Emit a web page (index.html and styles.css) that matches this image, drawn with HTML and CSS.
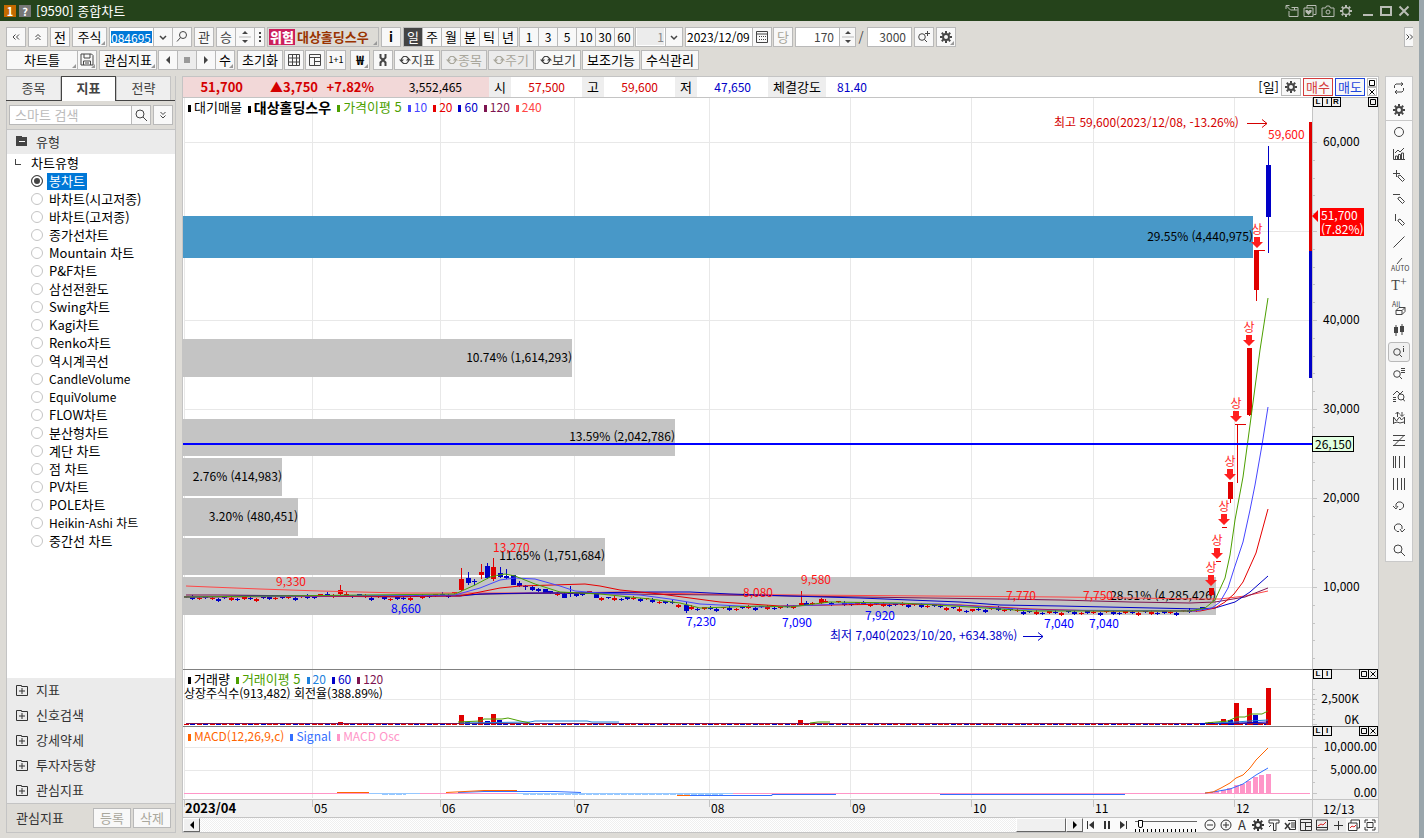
FILE: index.html
```html
<!DOCTYPE html>
<html lang="ko">
<head>
    <meta charset="UTF-8">
    <meta name="viewport" content="width=device-width, initial-scale=1.0">
    <title>[9590] 종합차트</title>
    <link rel="stylesheet" href="styles.css">
</head>
<body>
    <!-- icons -->
    <svg class="defs" aria-hidden="true">
        <symbol id="gear" viewBox="0 0 12 12"><circle cx="6" cy="6" r="3" fill="none" stroke="currentColor" stroke-width="2"/><path d="M6 0v2M6 10v2M0 6h2M10 6h2M1.8 1.8l1.4 1.4M8.8 8.8l1.4 1.4M10.2 1.8L8.8 3.2M3.2 8.8L1.8 10.2" stroke="currentColor" stroke-width="2"/></symbol>
        <symbol id="gear-thin" viewBox="0 0 12 12"><circle cx="6" cy="6" r="3.5" fill="none" stroke="currentColor" stroke-width="1.3"/><path d="M6 0v2M6 10v2M0 6h2M10 6h2M1.8 1.8l1.4 1.4M8.8 8.8l1.4 1.4M10.2 1.8L8.8 3.2M3.2 8.8L1.8 10.2" stroke="currentColor" stroke-width="2"/></symbol>
        <symbol id="find" viewBox="0 0 12 12"><circle cx="5" cy="5" r="4" fill="none" stroke="currentColor"/><path d="M8 8l4 4" stroke="currentColor" fill="none"/></symbol>
        <symbol id="find-left" viewBox="0 0 12 12"><circle cx="7" cy="4" r="3.5" fill="none" stroke="currentColor"/><path d="M4.5 6.500L1 10.5" stroke="currentColor"/></symbol>
        <symbol id="find-plus" viewBox="0 0 12 12"><circle cx="4" cy="6" r="3.3" fill="none" stroke="currentColor"/><path d="M6.500 8.500L9 11M7 2.500h5M9.500 0v5" stroke="currentColor"/></symbol>
        <symbol id="find-info" viewBox="0 0 12 12"><circle cx="4" cy="6" r="3.3" fill="none" stroke="currentColor"/><path d="M6.500 8.500L9 11M10.500 0v1M10.500 2v4" stroke="currentColor"/></symbol>
        <symbol id="find-list" viewBox="0 0 12 12"><circle cx="4" cy="6" r="3.3" fill="none" stroke="currentColor"/><path d="M6.500 8.500L9 11M8 .5h4M8 2.500h4M8 4.500h4" stroke="currentColor"/></symbol>
        <symbol id="down" viewBox="0 0 12 12"><path d="M3 5l3 3 3-3" fill="none" stroke="currentColor" stroke-width="1.5"/></symbol>
        <symbol id="dbl-left" viewBox="0 0 12 12"><path d="M5.500 3.500L3 6l2.500 2.500M9 3.500L6.500 6 9 8.500" fill="none" stroke="currentColor"/></symbol>
        <symbol id="dbl-right" viewBox="0 0 12 12"><path d="M3.500 3.500L6 6 3.500 8.500M7 3.500L9.500 6 7 8.500" fill="none" stroke="currentColor"/></symbol>
        <symbol id="dbl-up" viewBox="0 0 12 12"><path d="M3.500 6L6 3.500 8.500 6M3.500 9L6 6.500 8.500 9" fill="none" stroke="currentColor"/></symbol>
        <symbol id="dbl-down" viewBox="0 0 12 12"><path d="M3.500 3L6 5.500 8.500 3M3.500 6.500L6 9l2.500-2.500" fill="none" stroke="currentColor"/></symbol>
        <symbol id="updown" viewBox="0 0 12 16"><path d="M3 5h6L6 2zM3 11h6l-3 3z" fill="currentColor"/><path d="M0 8h12" stroke="#b9b9b9"/></symbol>
        <symbol id="dots" viewBox="0 0 4 12"><path d="M1 1h2v2H1zM1 5h2v2H1zM1 9h2v2H1z" fill="currentColor"/></symbol>
        <symbol id="cal" viewBox="0 0 12 12"><path d="M.5 .5h11v11H.5zM.5 3h11" fill="none" stroke="currentColor"/><path d="M3 5.500h7M3 8.500h7" stroke="currentColor" stroke-dasharray="1 1"/></symbol>
        <symbol id="save" viewBox="0 0 14 14"><path d="M1 1h10.500l1.500 1.500V12H1zM4 1v4h6V1M3.500 12V8h7v4M5 10h4" fill="none" stroke="currentColor"/></symbol>
        <symbol id="left" viewBox="0 0 12 12"><path d="M8 2v8L4 6z" fill="currentColor"/></symbol>
        <symbol id="right" viewBox="0 0 12 12"><path d="M4 2v8l4-4z" fill="currentColor"/></symbol>
        <symbol id="stop" viewBox="0 0 12 12"><path d="M3 3h6v6H3z" fill="#999"/></symbol>
        <symbol id="grid" viewBox="0 0 12 12"><path d="M.5 .5h11v11H.5zM.5 4h11M.5 8h11M4.500 .5v11M8.500 .5v11" fill="none" stroke="currentColor"/></symbol>
        <symbol id="layout" viewBox="0 0 12 12"><path d="M.5 .5h11v11H.5zM.5 3.500h11M5.500 3.500v8M5.500 7.500h6" fill="none" stroke="currentColor"/></symbol>
        <symbol id="tools" viewBox="0 0 12 12"><path d="M3.500 0v3.500L6 6l2.500-2.500V0M3.500 12V8.500L6 6l2.500 2.500V12" fill="none" stroke="currentColor" stroke-width="2"/></symbol>
        <symbol id="sync" viewBox="0 0 12 12"><path d="M2.500 6.500V5l2-2.500h3L9 4M9.500 5.500V7l-2 2.500h-3L3 8" fill="none" stroke="currentColor" stroke-width="1.2"/><path d="M0 5.500h5L2.500 8.500zM7 6.500h5L9.500 3.500z" fill="currentColor"/></symbol>
        <symbol id="cycle" viewBox="0 0 12 12"><path d="M1.500 6V3.500L3 2h7M8 .5L10 2 8 4M10.500 6v2.500L9 10H2M4 8l-2 2 2 2" fill="none" stroke="currentColor"/></symbol>
        <symbol id="folder-plus" viewBox="0 0 12 11"><path d="M.5 .5h5V1.500h6v9H.5zM3 6h6M6 3v6" fill="none" stroke="currentColor"/></symbol>
        <symbol id="folder" viewBox="0 0 12 11"><path d="M0 0h6v1h5v9H0z" fill="#444"/><path d="M3 5.500h6" stroke="#fff"/></symbol>
        <symbol id="circle" viewBox="0 0 12 12"><circle cx="6" cy="6" r="4.5" fill="none" stroke="currentColor"/></symbol>
        <symbol id="chart" viewBox="0 0 12 12"><path d="M.5 1v10.500H12M2.500 11V8h2v3M5.500 11V6.500h2V11M8.500 11V5h2v6M2 5l3-3 2 2 4-4" fill="none" stroke="currentColor"/></symbol>
        <symbol id="pen-plus" viewBox="0 0 12 12"><path d="M0 3.500h7M3.500 0v7M5 6l2-1 4.500 4.500-2 2L5 7z" fill="none" stroke="currentColor"/></symbol>
        <symbol id="pen-h" viewBox="0 0 12 12"><path d="M0 2.500h7M5 6l2-1 4.500 4.500-2 2L5 7z" fill="none" stroke="currentColor"/></symbol>
        <symbol id="pen-v" viewBox="0 0 12 12"><path d="M2.500 0v7M5 6l2-1 4.500 4.500-2 2L5 7z" fill="none" stroke="currentColor"/></symbol>
        <symbol id="line" viewBox="0 0 12 12"><path d="M.5 11.500l11-11" stroke="currentColor"/></symbol>
        <symbol id="candles" viewBox="0 0 12 12"><path d="M3 1v11M9 0v11" stroke="currentColor"/><path d="M1 3h4v6H1zM7 2h4v6H7z" fill="currentColor"/></symbol>
        <symbol id="find-wave" viewBox="0 0 12 12"><path d="M0 5l4-4 3 3 3-3M0 7.500h3M0 9.500h3M0 11.500h3M10 9l2 2.500" fill="none" stroke="currentColor"/><circle cx="8" cy="7" r="3" fill="none" stroke="currentColor"/></symbol>
        <symbol id="wave" viewBox="0 0 12 12"><path d="M.5 12V5l3 4 3-4 2 3 3-3v7M1 11l3-1 3 1 4-1M4.500 0v5M2.500 2l2-2 2 2M9 0v4M7 2.500l2 2 2-2" fill="none" stroke="currentColor"/></symbol>
        <symbol id="zed" viewBox="0 0 12 12"><path d="M0 1.500h12M0 6.500h12M0 11.500h12M11 1.500l-10 10" stroke="currentColor"/></symbol>
        <symbol id="bars-a" viewBox="0 0 12 12"><path d="M.5 0v12M2.500 0v12M6.500 0v12M11.500 0v12" stroke="currentColor"/></symbol>
        <symbol id="bars-b" viewBox="0 0 12 12"><path d="M.5 0v12M4.500 0v12M8.500 0v12M11.500 0v12" stroke="currentColor"/></symbol>
        <symbol id="undo" viewBox="0 0 12 12"><path d="M3 7V4L5 2h3l2.500 2v3L8 9.500H6M0 6l3 3 2-3" fill="none" stroke="currentColor"/></symbol>
        <symbol id="redo" viewBox="0 0 12 12"><path d="M9 7V4L7 2H4L1.500 4v3L4 9.500h2M12 7l-3 3-2-3" fill="none" stroke="currentColor"/></symbol>
        <symbol id="minus-c" viewBox="0 0 12 12"><circle cx="6" cy="6" r="5" fill="none" stroke="currentColor"/><path d="M3 6h6" stroke="currentColor"/></symbol>
        <symbol id="plus-c" viewBox="0 0 12 12"><circle cx="6" cy="6" r="5" fill="none" stroke="currentColor"/><path d="M3 6h6M6 3v6" stroke="currentColor"/></symbol>
        <symbol id="first" viewBox="0 0 12 12"><path d="M2.500 2v8" stroke="currentColor"/><path d="M9 2v8L4 6z" fill="currentColor"/></symbol>
        <symbol id="last" viewBox="0 0 12 12"><path d="M9.500 2v8" stroke="currentColor"/><path d="M3 2v8l5-4z" fill="currentColor"/></symbol>
        <symbol id="pause" viewBox="0 0 12 12"><path d="M4 2v8M8 2v8" stroke="currentColor" stroke-width="2"/></symbol>
        <symbol id="cross" viewBox="0 0 12 12"><path d="M2 6.500h9M6.500 2v9" stroke="currentColor"/></symbol>
        <symbol id="tee" viewBox="0 0 12 12"><path d="M1 1h10v3H8v7.500H5.500V4H1zM3 6L1 8" fill="none" stroke="currentColor"/></symbol>
        <symbol id="xls" viewBox="0 0 12 12"><path d="M4 1.500h7.500v9H5M7 4h4M7 6h4M7 8h4" fill="none" stroke="currentColor"/><path d="M1 4l5 6M6 4l-5 6" stroke="currentColor" stroke-width="1.5"/></symbol>
        <symbol id="spark" viewBox="0 0 12 12"><path d="M.5 1h11v10H.5zM.5 8.500h11" fill="none" stroke="currentColor"/><path d="M2 7l3-2 2 1 3-3" fill="none" stroke="#d22"/></symbol>
        <symbol id="stack" viewBox="0 0 12 12"><path d="M3 4V1h8.500v8H9M.5 4H9v7.500H.5z" fill="none" stroke="currentColor"/><path d="M2 9l2-2 2 1 2-2" fill="none" stroke="#d22"/></symbol>
        <symbol id="full" viewBox="0 0 12 12"><path d="M3 3.500h6v5H3zM1 4V1h3M8 1h3v3M11 8v3H8M4 11H1V8" fill="none" stroke="currentColor"/></symbol>
        <symbol id="popout" viewBox="0 0 13 12"><path d="M6 2.500h6.500v9H3.500V6M5 5h7M9 2.500V5M1 1l4 4M.5 4V.5H4" fill="none" stroke="currentColor"/></symbol>
        <symbol id="copy" viewBox="0 0 13 12"><path d="M3.500 3V.5h9v9H10M.5 3h9v8.500h-9z" fill="none" stroke="currentColor"/><path d="M2 5h2l1 1 1-1h2v2L5 10 2 7z" fill="currentColor"/></symbol>
        <symbol id="camera" viewBox="0 0 13 12"><path d="M.5 3H4l1-2h3l1 2h3.500v8.500H.5z" fill="none" stroke="currentColor"/><circle cx="6.5" cy="7" r="2" fill="none" stroke="currentColor"/></symbol>
        <symbol id="min" viewBox="0 0 12 12"><path d="M1 10h10" stroke="currentColor" stroke-width="2"/></symbol>
        <symbol id="max" viewBox="0 0 12 12"><path d="M1 2h10v8H1z" fill="none" stroke="currentColor" stroke-width="2"/></symbol>
        <symbol id="close" viewBox="0 0 12 12"><path d="M1.500 1.500l9 9M10.500 1.500l-9 9" stroke="currentColor" stroke-width="2"/></symbol>
        <symbol id="box" viewBox="0 0 8 8"><path d="M1.500 1.500h5v5h-5z" fill="none" stroke="currentColor"/></symbol>
        <symbol id="x" viewBox="0 0 8 8"><path d="M1.500 1.500l5 5M6.500 1.500l-5 5" stroke="currentColor"/></symbol>
    </svg>

    <header class="titlebar">
        <span class="num">1</span><span class="num help">?</span>
        <h1>[9590] 종합차트</h1>
        <div class="window-btns">
            <button aria-label="분리"><svg><use href="#popout"/></svg></button>
            <button aria-label="복사"><svg><use href="#copy"/></svg></button>
            <button aria-label="캡처"><svg><use href="#camera"/></svg></button>
            <button aria-label="설정"><svg><use href="#gear-thin"/></svg></button>
            <button class="first-win" aria-label="최소화"><svg><use href="#min"/></svg></button>
            <button aria-label="최대화"><svg><use href="#max"/></svg></button>
            <button aria-label="닫기"><svg><use href="#close"/></svg></button>
        </div>
    </header>

    <div class="toolbar">
        <button class="btn" aria-label="이전"><svg><use href="#dbl-left"/></svg></button>
        <button class="btn" aria-label="위로"><svg><use href="#dbl-up"/></svg></button>
        <button class="btn">전</button>
        <button class="btn w34 more">주식</button>
        <div class="group">
            <label class="field w45"><input class="code" type="text" value="084695" aria-label="종목코드"></label>
            <button class="btn" aria-label="목록"><svg><use href="#down"/></svg></button>
            <button class="btn" aria-label="찾기"><svg><use href="#find-left"/></svg></button>
        </div>
        <button class="btn soft">관</button>
        <div class="group">
            <button class="btn soft">승</button>
            <button class="btn spin" aria-label="순서"><svg><use href="#updown"/></svg></button>
            <button class="btn w11" aria-label="더보기"><svg class="dots"><use href="#dots"/></svg></button>
        </div>
        <button class="btn stock more"><b>위험</b>대상홀딩스우</button>
        <button class="btn bold">i</button>
        <div class="group tight">
            <button class="btn on">일</button><button class="btn">주</button><button class="btn">월</button><button class="btn">분</button><button class="btn">틱</button><button class="btn">년</button>
        </div>
        <div class="group tight">
            <button class="btn num12">1</button><button class="btn num12">3</button><button class="btn num12">5</button><button class="btn num12">10</button><button class="btn num12">30</button><button class="btn num12">60</button>
        </div>
        <div class="group">
            <label class="field w30 off"><input type="text" value="1" aria-label="단위" disabled></label>
            <button class="btn w18" aria-label="단위 선택"><svg><use href="#down"/></svg></button>
        </div>
        <div class="group tight">
            <label class="field w68"><input type="text" value="2023/12/09" aria-label="날짜"></label>
            <button class="btn" aria-label="달력"><svg><use href="#cal"/></svg></button>
        </div>
        <button class="btn disabled" disabled>당</button>
        <div class="group tight">
            <label class="field w45 end"><input type="text" value="170" aria-label="표시 개수"></label>
            <button class="btn w16" aria-label="개수 조절"><svg><use href="#updown"/></svg></button>
        </div>
        <span class="slash">/</span>
        <label class="field w45 end"><input type="text" value="3000" aria-label="전체 개수"></label>
        <button class="btn" aria-label="확대"><svg><use href="#find-plus"/></svg></button>
        <button class="btn more" aria-label="설정"><svg><use href="#gear"/></svg></button>
        <button class="btn expand" aria-label="펼치기"><svg><use href="#dbl-right"/></svg></button>
    </div>

    <div class="toolbar second">
        <div class="group">
            <button class="btn w72 more">차트틀</button>
            <button class="btn more" aria-label="저장"><svg class="i14"><use href="#save"/></svg></button>
        </div>
        <button class="btn w58 more">관심지표</button>
        <div class="group">
            <button class="btn" aria-label="뒤로"><svg><use href="#left"/></svg></button>
            <button class="btn dim" aria-label="정지"><svg><use href="#stop"/></svg></button>
            <button class="btn" aria-label="앞으로"><svg><use href="#right"/></svg></button>
            <button class="btn more">수</button>
        </div>
        <button class="btn w46">초기화</button>
        <button class="btn" aria-label="표"><svg><use href="#grid"/></svg></button>
        <button class="btn" aria-label="배치"><svg><use href="#layout"/></svg></button>
        <button class="btn tiny">1+1</button>
        <button class="btn more bold small-gap">₩</button>
        <button class="btn small-gap" aria-label="도구"><svg><use href="#tools"/></svg></button>
        <button class="btn w46 soft"><svg><use href="#sync"/></svg>지표</button>
        <button class="btn w46 disabled dim" disabled><svg><use href="#sync"/></svg>종목</button>
        <button class="btn w46 disabled dim" disabled><svg><use href="#sync"/></svg>주기</button>
        <button class="btn w46 soft"><svg><use href="#sync"/></svg>보기</button>
        <button class="btn w58">보조기능</button>
        <button class="btn w58">수식관리</button>
    </div>

    <main>
        <aside class="sidebar">
            <nav class="tabs">
                <button>종목</button><button class="active">지표</button><button>전략</button>
            </nav>
            <div class="search">
                <input type="text" placeholder="스마트 검색" aria-label="스마트 검색">
                <button class="btn" aria-label="검색"><svg><use href="#find"/></svg></button>
                <button class="btn last" aria-label="펼치기"><svg><use href="#dbl-down"/></svg></button>
            </div>
            <button class="fold open"><svg><use href="#folder"/></svg>유형</button>
            <fieldset class="types">
                <legend>차트유형</legend>
                <label><input type="radio" name="type" checked><span>봉차트</span></label>
                <label><input type="radio" name="type"><span>바차트(시고저종)</span></label>
                <label><input type="radio" name="type"><span>바차트(고저종)</span></label>
                <label><input type="radio" name="type"><span>종가선차트</span></label>
                <label><input type="radio" name="type"><span>Mountain 차트</span></label>
                <label><input type="radio" name="type"><span>P&amp;F차트</span></label>
                <label><input type="radio" name="type"><span>삼선전환도</span></label>
                <label><input type="radio" name="type"><span>Swing차트</span></label>
                <label><input type="radio" name="type"><span>Kagi차트</span></label>
                <label><input type="radio" name="type"><span>Renko차트</span></label>
                <label><input type="radio" name="type"><span>역시계곡선</span></label>
                <label><input type="radio" name="type"><span class="latin">CandleVolume</span></label>
                <label><input type="radio" name="type"><span class="latin">EquiVolume</span></label>
                <label><input type="radio" name="type"><span>FLOW차트</span></label>
                <label><input type="radio" name="type"><span>분산형차트</span></label>
                <label><input type="radio" name="type"><span>계단 차트</span></label>
                <label><input type="radio" name="type"><span>점 차트</span></label>
                <label><input type="radio" name="type"><span>PV차트</span></label>
                <label><input type="radio" name="type"><span>POLE차트</span></label>
                <label><input type="radio" name="type"><span class="latin">Heikin-Ashi 차트</span></label>
                <label><input type="radio" name="type"><span>중간선 차트</span></label>
            </fieldset>
            <button class="fold"><svg><use href="#folder-plus"/></svg>지표</button>
            <button class="fold"><svg><use href="#folder-plus"/></svg>신호검색</button>
            <button class="fold"><svg><use href="#folder-plus"/></svg>강세약세</button>
            <button class="fold"><svg><use href="#folder-plus"/></svg>투자자동향</button>
            <button class="fold"><svg><use href="#folder-plus"/></svg>관심지표</button>
            <div class="side-foot">
                <span>관심지표</span>
                <button class="btn disabled" disabled>등록</button>
                <button class="btn disabled" disabled>삭제</button>
            </div>
        </aside>

        <section class="chart-box">
            <div class="quote">
                <div class="pink"><b class="q-price">51,700</b><b class="q-diff">▲3,750</b><b class="q-rate">+7.82%</b><span class="q-vol">3,552,465</span></div>
                <span class="cap">시</span><span class="val red">57,500</span>
                <span class="cap">고</span><span class="val red">59,600</span>
                <span class="cap">저</span><span class="val blue">47,650</span>
                <span class="cap wide">체결강도</span><span class="val blue">81.40</span>
                <div class="quote-btns">
                    <span>[일]</span>
                    <button class="btn" aria-label="설정"><svg><use href="#gear"/></svg></button>
                    <button class="btn buy">매수</button>
                    <button class="btn sell">매도</button>
                    <div class="mini"><button aria-label="최대"><svg><use href="#box"/></svg></button><button aria-label="닫기"><svg><use href="#x"/></svg></button></div>
                </div>
            </div>

            <div class="panel">
                <svg class="plot" viewBox="183 98 1195 571">
                    <rect class="axis-bg" x="1312" y="98" width="66" height="571"/>
                    <path class="grid" d="M184.500 98v571M312.500 98v571M440.500 98v571M574.500 98v571M709.500 98v571M850.500 98v571M971.500 98v571M1093.500 98v571M1234.500 98v571M184 142.500h1128M184 231.500h1128M184 320.500h1128M184 409.500h1128M184 498.500h1128M184 587.500h1128"/>
                    <!-- volume by price -->
                    <rect class="vbp max" x="183" y="216" width="1070" height="42"/>
                    <rect class="vbp" x="183" y="339" width="389" height="38"/>
                    <rect class="vbp" x="183" y="419" width="492" height="37"/>
                    <rect class="vbp" x="183" y="458" width="99" height="38"/>
                    <rect class="vbp" x="183" y="498" width="115" height="38"/>
                    <rect class="vbp" x="183" y="538" width="422" height="37"/>
                    <rect class="vbp" x="183" y="577" width="1033" height="38"/>
                    <g class="end">
                        <text x="1253" y="241">29.55% (4,440,975)</text>
                        <text x="572" y="362">10.74% (1,614,293)</text>
                        <text x="675" y="441">13.59% (2,042,786)</text>
                        <text x="282" y="481">2.76% (414,983)</text>
                        <text x="298" y="521">3.20% (480,451)</text>
                        <text x="605" y="560">11.65% (1,751,684)</text>
                        <text x="1216" y="600">28.51% (4,285,426)</text>
                    </g>
                    <g id="candles-layer"></g>
                    <g class="ma">
                        <polyline class="ma240" points="186,586 210,587 260,589 320,591 400,593 560,593 620,592 700,594 800,595 930,596 1060,597 1200,599 1220,599 1245,596 1268,591"/>
                        <polyline class="ma120" points="186,595 222,595 400,597 460,595 490,594 560,593 620,594 720,595 793,596 860,597 1000,599 1060,600 1130,602 1190,603 1215,602 1245,597 1268,588"/>
                        <polyline class="ma60" points="184,597 254,596 460,596 480,594 530,593 575,593 650,592 690,592 730,594 790,596 860,598 960,602 1000,605 1060,606 1200,609 1215,608 1235,602 1250,592 1268,576"/>
                        <polyline class="ma20" points="184,597 460,596 480,592 500,588 520,586 585,584 600,586 620,590 660,594 720,602 780,606 830,605 900,604 960,605 1030,609 1100,611 1200,611 1215,608 1225,602 1234,594 1243,582 1256,553 1268,509"/>
                        <polyline class="ma10" points="184,597 455,595 480,588 500,580 515,578 535,579 560,586 575,591 600,593 640,595 670,599 700,604 760,607 820,605 860,603 940,604 1000,608 1040,610 1195,611 1212,608 1220,602 1228,588 1234,569 1243,542 1250,510 1255,485 1262,445 1268,407"/>
                        <polyline class="ma5" points="184,597 455,594 475,585 490,577 505,574 515,576 535,584 560,592 600,594 650,599 680,603 700,608 760,606 790,607 830,602 900,603 970,607 1030,611 1190,611 1205,608 1215,600 1225,578 1230,555 1235,520 1243,477 1250,425 1260,350 1268,298"/>
                    </g>
                    <path class="base" d="M183 444h1129"/>
                    <g class="hi">
                        <text x="276" y="586">9,330</text><text x="493" y="552">13,270</text><text x="743" y="597">8,080</text><text x="801" y="584">9,580</text><text x="1006" y="600">7,770</text><text x="1083" y="600">7,750</text><text x="1268" y="139">59,600</text>
                    </g>
                    <g class="lo">
                        <text x="391" y="613">8,660</text><text x="686" y="626">7,230</text><text x="782" y="627">7,090</text><text x="865" y="620">7,920</text><text x="1044" y="628">7,040</text><text x="1089" y="628">7,040</text>
                    </g>
                    <g class="peak"><text x="1054" y="127">최고 59,600(2023/12/08, -13.26%)</text><path d="M1247 123.500h20M1262 119.500l5 4-5 4"/></g>
                    <g class="peak low"><text x="830" y="640">최저 7,040(2023/10/20, +634.38%)</text><path d="M1023 636.500h20M1038 632.500l5 4-5 4"/></g>
                    <g id="limit-layer"></g>
                    <path class="bar-red" d="M1310.500 122v129"/><path class="bar-blue" d="M1310.500 251v127"/>
                    <path class="tick" d="M1312.500 98v571"/>
                    <g id="tick-layer" class="tick"></g>
                    <g><text x="1323" y="146">60,000</text><text x="1323" y="324">40,000</text><text x="1323" y="413">30,000</text><text x="1323" y="502">20,000</text><text x="1323" y="591">10,000</text></g>
                    <path class="now" d="M1312 216l6-6v12zM1320 208h44v28h-44z"/>
                    <g class="white"><text x="1321" y="220">51,700</text><text x="1321" y="234">(7.82%)</text></g>
                    <rect class="base-tag" x="1312.5" y="436.5" width="41" height="15"/><text x="1315" y="449">26,150</text>
                </svg>
                <div class="legend"><span class="k">대기매물</span><span class="k strong">대상홀딩스우</span><span class="g">가격이평 5</span><span class="b10">10</span><span class="r20">20</span><span class="b60">60</span><span class="p120">120</span><span class="r240">240</span></div>
                <div class="pane-btns"><button>L</button><button>I</button><button>R</button><button class="far" aria-label="최대"><svg><use href="#box"/></svg></button></div>
            </div>

            <div class="panel">
                <svg class="plot" viewBox="183 670 1195 56">
                    <rect class="axis-bg" x="1312" y="670" width="66" height="57"/>
                    <path class="grid" d="M184.500 670v56M312.500 670v56M440.500 670v56M574.500 670v56M709.500 670v56M850.500 670v56M971.500 670v56M1093.500 670v56M1234.500 670v56M184 699.500h1128"/>
                    <g id="volume-layer"></g>
                    <g class="ma">
                        <polyline class="ma120" points="186,723.5 1268,723.5"/>
                        <polyline class="ma60" points="1200,723.5 1240,723 1268,722"/>
                        <polyline class="v20" points="460,723 530,722 535,721 587,721 592,722 619,722"/>
                        <polyline class="v20" points="1215,723 1235,722 1250,721 1268,720"/>
                        <polyline class="ma5" points="458,722 480,721 484,719 502,719 508,718 520,721 530,723"/>
                        <polyline class="ma5" points="810,723 818,722 830,722"/>
                        <polyline class="ma5" points="1205,723 1228,721 1237,717 1245,717 1251,714 1262,714 1268,711"/>
                    </g>
                    <path class="tick" d="M1312.500 670v56M1312 689.500h3M1312 694.500h3M1312 699.500h5M1312 704.500h3M1312 709.500h3M1312 714.500h3M1312 719.500h3M1312 724.500h5"/>
                    <g class="end"><text x="1359" y="703">2,500K</text><text x="1359" y="724">0K</text></g>
                </svg>
                <div class="legend"><span class="k">거래량</span><span class="g">거래이평 5</span><span class="c20">20</span><span class="b60">60</span><span class="p120">120</span></div>
                <p class="note">상장주식수(913,482) 회전율(388.89%)</p>
                <div class="pane-btns"><button>L</button><button>I</button><button class="far" aria-label="최대"><svg><use href="#box"/></svg></button><button aria-label="닫기"><svg><use href="#x"/></svg></button></div>
            </div>

            <div class="panel thin">
                <svg class="plot" viewBox="183 727 1195 72">
                    <rect class="axis-bg" x="1312" y="727" width="66" height="73"/>
                    <path class="grid" d="M184.500 727v71M312.500 727v71M440.500 727v71M574.500 727v71M709.500 727v71M850.500 727v71M971.500 727v71M1093.500 727v71M1234.500 727v71M184 747.500h1128M184 770.500h1128"/>
                    <path class="osc-line" d="M184 793.500h1126"/>
                    <path class="osc-down" d="M369 793.500h51M517 793.500h216"/>
                    <path class="osc-down" d="M382 794.500h24M523 794.500h200" stroke-dasharray="6 1"/>
                    <g id="osc-layer"></g>
                    <polyline class="macd" points="337,792.5 369,792.5"/>
                    <polyline class="signal" points="458,792.5 484,791.5 555,791.5 581,792.5"/>
                    <polyline class="macd" points="446,792.5 465,791.5 484,790.5 517,790.5"/>
                    <polyline class="signal" points="690,795.5 772,795.5 772,794.5 836,794.5"/>
                    <polyline class="macd" points="677,795.5 690,795.5"/>
                    <polyline class="signal" points="940,794.5 1125,794.5"/>
                    <polyline class="signal" points="1205,793 1213,792 1230,789 1243,784 1256,775 1268,768"/>
                    <polyline class="macd" points="1205,793 1213,792 1221,788 1230,783 1236,778 1243,775 1250,768 1256,760 1268,748"/>
                    <path class="tick" d="M1312.500 727v73M1312 747.500h5M1312 758.500h3M1312 770.500h5M1312 782.500h3M1312 793.500h5"/>
                    <g class="end"><text x="1377" y="751">10,000.00</text><text x="1377" y="774">5,000.00</text><text x="1377" y="797">0.00</text></g>
                </svg>
                <div class="legend"><span class="macd-k">MACD(12,26,9,c)</span><span class="sig-k">Signal</span><span class="osc-k">MACD Osc</span></div>
                <div class="pane-btns"><button>L</button><button>I</button><button class="far" aria-label="최대"><svg><use href="#box"/></svg></button><button aria-label="닫기"><svg><use href="#x"/></svg></button></div>
            </div>

            <svg class="dates" viewBox="183 800 1195 17">
                <path class="tick" d="M184.500 800v7M312.500 800v7M440.500 800v7M574.500 800v7M709.500 800v7M850.500 800v7M971.500 800v7M1093.500 800v7M1234.500 800v7M1312.500 800v17"/>
                <text class="year" x="185" y="813">2023/04</text>
                <text x="314" y="813">05</text><text x="442" y="813">06</text><text x="576" y="813">07</text><text x="711" y="813">08</text><text x="852" y="813">09</text><text x="973" y="813">10</text><text x="1095" y="813">11</text><text x="1236" y="813">12</text><text x="1323" y="814">12/13</text>
            </svg>

            <div class="scroll">
                <button class="arrow" aria-label="왼쪽"><svg><use href="#left"/></svg></button>
                <div class="track"><div class="thumb"></div></div>
                <button class="arrow" aria-label="오른쪽"><svg><use href="#right"/></svg></button>
                <div class="controls">
                    <button aria-label="처음"><svg><use href="#first"/></svg></button>
                    <button aria-label="일시정지"><svg><use href="#pause"/></svg></button>
                    <button aria-label="마지막"><svg><use href="#last"/></svg></button>
                    <input type="range" min="0" max="100" value="6" aria-label="속도">
                    <button aria-label="축소"><svg><use href="#minus-c"/></svg></button>
                    <button aria-label="확대"><svg><use href="#plus-c"/></svg></button>
                    <button>A</button>
                    <button aria-label="설정"><svg><use href="#gear"/></svg></button>
                    <button aria-label="도구"><svg><use href="#tee"/></svg></button>
                    <button aria-label="엑셀"><svg><use href="#xls"/></svg></button>
                    <button class="on" aria-label="표"><svg><use href="#layout"/></svg></button>
                    <button class="on" aria-label="차트"><svg><use href="#spark"/></svg></button>
                    <button class="on" aria-label="십자선"><svg><use href="#cross"/></svg></button>
                    <button aria-label="겹치기"><svg><use href="#stack"/></svg></button>
                    <button aria-label="전체화면"><svg><use href="#full"/></svg></button>
                </div>
            </div>
        </section>

        <nav class="draw-tools">
            <button aria-label="새로고침"><svg><use href="#cycle"/></svg></button>
            <button class="sep" aria-label="설정"><svg><use href="#gear"/></svg></button>
            <button aria-label="원"><svg><use href="#circle"/></svg></button>
            <button aria-label="차트"><svg><use href="#chart"/></svg></button>
            <button aria-label="십자 그리기"><svg><use href="#pen-plus"/></svg></button>
            <button aria-label="수평선"><svg><use href="#pen-h"/></svg></button>
            <button aria-label="수직선"><svg><use href="#pen-v"/></svg></button>
            <button aria-label="추세선"><svg><use href="#line"/></svg></button>
            <button class="auto" aria-label="자동"><svg viewBox="0 0 16 14"><path d="M6 7l5-6" stroke="currentColor"/><text x="0" y="14">AUTO</text></svg></button>
            <button class="txt">T<sup>+</sup></button>
            <button class="all" aria-label="모두 지우기"><svg viewBox="0 0 16 14"><text x="1" y="6">All</text><path d="M5 9.500l3-3h6l-3 3zM5 9.500v4h6l3-3v-4M11 9.500v4" fill="none" stroke="currentColor"/></svg></button>
            <button aria-label="봉"><svg><use href="#candles"/></svg></button>
            <button class="on" aria-label="정보"><svg><use href="#find-info"/></svg></button>
            <button aria-label="목록 보기"><svg><use href="#find-list"/></svg></button>
            <button aria-label="파동 찾기"><svg><use href="#find-wave"/></svg></button>
            <button aria-label="파동"><svg><use href="#wave"/></svg></button>
            <button aria-label="피보나치"><svg><use href="#zed"/></svg></button>
            <button aria-label="시간대"><svg><use href="#bars-a"/></svg></button>
            <button aria-label="등간격"><svg><use href="#bars-b"/></svg></button>
            <button aria-label="실행 취소"><svg><use href="#undo"/></svg></button>
            <button aria-label="다시 실행"><svg><use href="#redo"/></svg></button>
            <button aria-label="돋보기"><svg><use href="#find"/></svg></button>
        </nav>
    </main>
    <script src="chart.js"></script>
</body>
</html>
```
FILE: styles.css
```css
/* Global Styles */
* {
    box-sizing: border-box;
}

body {
    margin: 0;
    height: 100vh;
    display: flex;
    flex-direction: column;
    overflow: hidden;
    font-family: "Noto Sans CJK KR", sans-serif;
    font-size: 13px;
    line-height: 16px;
    color: #000;
    background-color: #dddbd6;
    border-right: 5px solid #9aa6ac;
}

button,
input {
    font: inherit;
    color: inherit;
    padding: 0;
    margin: 0;
}

button {
    white-space: nowrap;
    display: flex;
    align-items: center;
    justify-content: center;
    flex: none;
    border: none;
    background: none;
}

svg {
    width: 12px;
    height: 12px;
    flex: none;
}

.defs {
    position: absolute;
    width: 0;
    height: 0;
}

/* Title bar */
.titlebar {
    display: flex;
    align-items: center;
    flex: none;
    height: 21px;
    padding: 0 8px 0 4px;
    gap: 3px;
    background-color: #25431b;
    color: #fff;
}

.titlebar h1 {
    margin: 0 0 0 2px;
    font-size: 13px;
    font-weight: normal;
}

.num {
    width: 12px;
    height: 12px;
    font-size: 11px;
    line-height: 12px;
    font-weight: bold;
    text-align: center;
    background-color: #c46a00;
}

.help {
    background-color: #777;
}

.window-btns {
    display: flex;
    gap: 4px;
    margin-left: auto;
    color: #b9bdb5;
}

.window-btns svg {
    width: 14px;
}

.first-win {
    margin-left: 4px;
}

/* Toolbars */
.toolbar {
    display: flex;
    flex: none;
    gap: 2px;
    height: 20px;
    margin: 6px 6px 0;
}

.second {
    gap: 1px;
    margin: 3px 6px 0;
}

.btn {
    width: 20px;
    height: 20px;
    padding-bottom: 1px;
    border: 1px solid #b9b9b9;
    background-color: #f8f8f8;
    color: #000;
    position: relative;
}

.btn svg {
    color: #444;
}

.group {
    display: flex;
}

.group > * + * {
    margin-left: -1px;
}

.tight {
    margin-right: -1px;
}

.second .group {
    margin-right: 1px;
}

.more::after {
    content: "";
    position: absolute;
    right: 1px;
    bottom: 1px;
    border-left: 4px solid transparent;
    border-bottom: 4px solid #999;
}

.w11 { width: 11px; }
.w16 { width: 17px; }
.w18 { width: 18px; }
.w30 { width: 31px; }
.w34 { width: 35px; }
.w45 { width: 45px; }
.w46 { width: 46px; }
.w58 { width: 58px; }
.w68 { width: 68px; }
.w72 { width: 72px; }

.btn .dots {
    width: 4px;
}

.btn .i14 {
    width: 14px;
    height: 14px;
}

.btn.spin svg,
.btn.w16 svg {
    height: 16px;
}

.btn.on {
    background-color: #444;
    color: #fff;
}

.btn.soft {
    color: #444;
}

.btn.dim {
    background-color: #ececec;
}

.btn.disabled,
.btn.disabled svg {
    color: #a9a79c;
}

.btn.bold {
    font-weight: bold;
}

.num12 {
    font-size: 12px;
}

.tiny {
    font-size: 9px;
}

.small-gap {
    margin-left: 2px;
}

.tiny + .small-gap {
    margin-left: 3px;
}

.stock {
    width: 112px;
    background-color: #dddbd6;
    color: #993300;
    font-weight: bold;
    justify-content: flex-start;
    padding-left: 1px;
    gap: 2px;
}

.stock b {
    padding: 0 1px;
    background-color: #cc1f5c;
    color: #fff;
}

.field {
    height: 20px;
    flex: none;
    border: 1px solid #b9b9b9;
    background-color: #fff;
    padding: 0 1px;
    font-size: 12px;
}

.field input {
    display: block;
    width: 100%;
    height: 17px;
    border: none;
    background: none;
}

.field .code {
    height: 12px;
    margin-top: 3px;
    line-height: 12px;
    background-color: #0078d7;
    color: #fff;
}

.off input {
    background-color: #ececec;
    color: #888;
}

.off input,
.end input {
    text-align: right;
}

.end {
    padding-right: 5px;
    color: #444;
}

.slash {
    width: 8px;
    text-align: center;
    line-height: 20px;
    color: #444;
}

.expand {
    width: 9px;
    margin-left: auto;
    border-right: none;
}

/* Main row */
main {
    flex: 1;
    min-height: 0;
    display: flex;
    gap: 6px;
    padding: 6px 6px 5px;
    align-items: stretch;
}

.sidebar {
    width: 170px;
    flex: none;
    display: flex;
    flex-direction: column;
    border: 1px solid #c4c4c4;
    border-top: none;
    background-color: #dddbd6;
}

.tabs {
    display: flex;
    height: 25px;
    flex: none;
    margin-left: -1px;
    border-bottom: 1px solid #444;
}

.tabs button {
    width: 55px;
    height: 24px;
    padding-bottom: 2px;
    border: 1px solid #c4c4c4;
    border-bottom: none;
    background-color: #eee;
    color: #444;
}

.tabs .active {
    height: 25px;
    border-color: #444;
    background-color: #fff;
    font-weight: bold;
}

.search {
    display: flex;
    flex: none;
    padding: 4px 2px;
    height: 29px;
    border-bottom: 1px solid #c4c4c4;
}

.search input {
    flex: 1;
    min-width: 0;
    height: 20px;
    padding: 0 5px 2px;
    border: 1px solid #b9b9b9;
    border-right: none;
    background-color: #fff;
}

.search input::placeholder {
    color: #bbb;
}

.search .last {
    margin-left: 2px;
}

.fold {
    height: 25px;
    justify-content: flex-start;
    gap: 8px;
    padding-left: 9px;
    padding-bottom: 1px;
    background-color: #ebebeb;
    color: #333;
}

.open {
    height: 24px;
}

.fold svg {
    height: 11px;
}

.types {
    flex: 1;
    min-height: 0;
    margin: 0;
    padding: 0;
    border: none;
    background-color: #fff;
}

.types legend {
    float: left;
    width: 100%;
    height: 18px;
    line-height: 17px;
    padding: 0 0 0 24px;
    position: relative;
}

.types legend::before {
    content: "";
    position: absolute;
    left: 8px;
    top: 5px;
    width: 5px;
    height: 5px;
    border-left: 1px solid #444;
    border-bottom: 1px solid #444;
}

.types label {
    clear: both;
    display: flex;
    align-items: center;
    height: 18px;
    padding-left: 24px;
    gap: 4px;
}

.types input {
    appearance: none;
    width: 12px;
    height: 12px;
    border: 1px solid #c4c4c4;
    border-radius: 50%;
    background-color: #fff;
}

.types input:checked {
    border-color: #444;
    background-color: #444;
    box-shadow: inset 0 0 0 2px #fff;
}

.types span {
    line-height: 16px;
    padding: 0 2px 1px;
}

.types .latin {
    font-size: 12px;
}

.types input:checked + span {
    background-color: #0078d7;
    color: #fff;
}

.side-foot {
    display: flex;
    align-items: center;
    flex: none;
    height: 29px;
    padding: 0 4px 0 9px;
    gap: 2px;
    border-top: 1px solid #c4c4c4;
    color: #333;
}

.side-foot span {
    margin-right: auto;
}

.side-foot .btn {
    width: 38px;
}

/* Chart */
.chart-box {
    flex: 1;
    min-width: 0;
    display: grid;
    grid-template-rows: 22px minmax(0, 572fr) minmax(0, 57fr) minmax(0, 73fr) 18px 14px;
    border: 1px solid #c4c4c4;
    border-top: none;
    background-color: #fff;
}

.quote {
    display: flex;
    align-items: center;
    min-width: 0;
    border-top: 1px solid #c4c4c4;
    border-bottom: 1px solid #c4c4c4;
    font-size: 12px;
    line-height: 20px;
}

.pink {
    display: flex;
    width: 306px;
    flex: none;
    background-color: #f2d8d8;
    color: #d40000;
}

.pink b {
    font-size: 13px;
}

.q-price {
    width: 60px;
    text-align: right;
}

.q-diff {
    width: 75px;
    text-align: right;
}

.q-rate {
    width: 56px;
    text-align: right;
}

.q-vol {
    width: 88px;
    text-align: right;
    color: #000;
}

.cap {
    width: 22px;
    flex: none;
    text-align: center;
    font-size: 13px;
    background-color: #eee;
}

.wide {
    width: 58px;
}

.val {
    width: 71px;
    flex: none;
    padding-right: 17px;
    text-align: right;
}

.wide + .val {
    width: 58px;
}

.red { color: #d40000; }
.blue { color: #0000c8; }

.quote-btns {
    display: flex;
    align-items: center;
    gap: 2px;
    margin-left: auto;
    padding-right: 1px;
    font-size: 13px;
}

.quote-btns .btn {
    height: 18px;
}

.quote-btns .buy {
    width: 30px;
    border-color: #d43c3c;
    color: #d43c3c;
}

.quote-btns .sell {
    width: 30px;
    border-color: #1e46dc;
    color: #1e46dc;
}

.mini button {
    width: 10px;
    height: 9px;
    border: 1px solid #b9b9b9;
}

.mini svg,
.pane-btns svg {
    width: 8px;
    height: 8px;
}

.panel {
    position: relative;
    min-width: 0;
    min-height: 0;
    border-bottom: 1px solid #808080;
}

.thin {
    border-bottom-color: #c4c4c4;
}

.plot {
    display: block;
    width: 100%;
    height: 100%;
}

.plot text,
.dates text {
    font-size: 12px;
}

.legend {
    position: absolute;
    left: 5px;
    top: 1px;
    display: flex;
    column-gap: 6px;
    font-size: 13px;
}

.legend span::before {
    content: "";
    display: inline-block;
    width: 3px;
    height: 7px;
    margin-right: 3px;
    background-color: currentColor;
}

.note {
    position: absolute;
    left: 1px;
    top: 15px;
    margin: 0;
    font-size: 12px;
}

.legend .b10,
.legend .r20,
.legend .b60,
.legend .p120,
.legend .r240,
.legend .c20,
.thin .legend span {
    font-size: 12px;
}

.legend .strong {
    font-size: 14px;
    font-weight: bold;
}

.g { color: #4c9f00; }
.b10 { color: #4646ff; }
.r20 { color: #e60000; }
.b60 { color: #0000c8; }
.p120 { color: #7d1450; }
.r240 { color: #ff4646; }
.c20 { color: #1e82dc; }
.macd-k { color: #ff6400; }
.sig-k { color: #326eff; }
.osc-k { color: #ff96c8; }

.pane-btns {
    position: absolute;
    top: -1px;
    right: 0;
    width: 65px;
    display: flex;
}

.pane-btns button {
    width: 10px;
    height: 10px;
    margin-right: -1px;
    border: 1px solid #000;
    background-color: #f0f0f0;
    font-family: "Liberation Sans", sans-serif;
    font-size: 8px;
    font-weight: bold;
    line-height: 8px;
}

.pane-btns button:last-child {
    margin-right: 0;
}

.pane-btns .far {
    margin-left: auto;
}

.axis-bg { fill: #f0f0f0; }
.grid { fill: none; stroke: #e8e8e8; }
.vbp { fill: #c4c4c4; }
.max { fill: #4898c8; }
.end { text-anchor: end; }
.tick { fill: none; stroke: #c4c4c4; }
.base { stroke: #0000ff; stroke-width: 2; }
.base-tag { fill: #e1ffe1; stroke: #000; }
.now { fill: #ff0000; }
.white { fill: #fff; }
.hi { fill: #ff1414; }
.lo { fill: #0000ff; }
.plot .hi text,
.plot .lo text { font-size: 12px; }
.peak { fill: #d40000; stroke: none; }
.peak path { fill: none; stroke: #d40000; }
.low { fill: #0000c8; }
.low path { stroke: #0000c8; }
.bar-red { stroke: #e00000; stroke-width: 3; }
.bar-blue { stroke: #0000c8; stroke-width: 3; }
.up { fill: #e00000; }
.dn { fill: #0000c8; }
.limit { fill: #ff1e1e; text-anchor: middle; }

.ma polyline,
.macd,
.signal {
    fill: none;
    stroke-width: 1;
}

.ma5 { stroke: #4c9f00; }
.ma10 { stroke: #4646ff; }
.ma20 { stroke: #e60000; }
.ma60 { stroke: #0000c8; }
.ma120 { stroke: #7d1450; }
.ma240 { stroke: #ff4646; }
.v20 { stroke: #1e82dc; }
.macd { stroke: #ff6400; }
.signal { stroke: #326eff; }
.osc { fill: #ff96c8; }
.osc-line { stroke: #ff96c8; }
.osc-down { stroke: #96c8ff; }

.dates {
    display: block;
    width: 100%;
    height: 18px;
    overflow: visible;
    background-color: #f0f0f0;
    border-bottom: 1px solid #c4c4c4;
}

.dates .year {
    font-size: 13px;
    font-weight: bold;
}

/* Bottom scroll bar */
.scroll {
    display: flex;
    min-width: 0;
    background-color: #fafafa;
}

.arrow,
.thumb {
    width: 17px;
    border: 1px solid #fff;
    border-right-color: #666;
    border-bottom-color: #666;
    background-color: #f0f0f0;
}

.track {
    flex: 1;
    display: flex;
    justify-content: flex-end;
    background: repeating-conic-gradient(#fff 0 25%, #efefef 0 50%) 0 0 / 2px 2px;
}

.thumb {
    width: 50px;
}

.controls {
    display: flex;
    flex: none;
    color: #333;
}

.controls button {
    width: 16px;
    height: 14px;
}

.controls .on {
    background-color: #ececec;
}

.controls input {
    appearance: none;
    width: 62px;
    height: 14px;
    margin: 0 5px 0 4px;
    background:
        linear-gradient(#666, #666) 0 3px / 100% 1px no-repeat,
        repeating-linear-gradient(to right, #000 0 1px, transparent 1px 4px) 0 100% / 100% 3px no-repeat;
}

.controls input::-webkit-slider-thumb {
    appearance: none;
    width: 5px;
    height: 8px;
    margin-top: -2px;
    border: 1px solid #000;
    border-radius: 0 0 2px 2px;
    background-color: #fff;
}

/* Right side tools */
.draw-tools {
    width: 28px;
    flex: none;
    align-self: flex-start;
    border: 1px solid #c9c9c9;
    background-color: #fafafa;
    color: #444;
}

.draw-tools button {
    width: 26px;
    height: 22px;
}

.draw-tools .sep {
    border-bottom: 1px solid #c9c9c9;
}

.draw-tools .on {
    width: 22px;
    height: 20px;
    margin: 1px 2px;
    border: 1px solid #b9b9b9;
    border-radius: 3px;
    background-color: #f0f0f0;
}

.auto svg,
.all svg {
    width: 16px;
    height: 14px;
    overflow: visible;
    font-size: 7px;
    fill: currentColor;
}

.draw-tools .txt {
    font-family: "Liberation Serif", serif;
    font-size: 14px;
}

.txt sup {
    font-size: 12px;
    line-height: 8px;
    align-self: flex-start;
    margin-top: 3px;
}
```
FILE: chart.js
```js
var NS = "http://www.w3.org/2000/svg";
var STEP = 6.39;

function add(layerId, tag, attrs, text) {
    var el = document.createElementNS(NS, tag);
    for (var key in attrs) {
        el.setAttribute(key, attrs[key]);
    }
    if (text) {
        el.textContent = text;
    }
    document.getElementById(layerId).appendChild(el);
}

function candle(x, top, bottom, high, low, up) {
    var cls = up ? "up" : "dn";
    x = Math.round(x);
    add("candles-layer", "rect", { class: cls, x: x, y: high, width: 1, height: Math.max(low - high, 1) });
    add("candles-layer", "rect", { class: cls, x: x - 2, y: top, width: 5, height: Math.max(bottom - top, 1) });
}

// x and price level of the quiet part of the chart
var level = [[184, 597], [230, 598], [300, 597], [340, 593], [370, 597], [400, 598], [430, 595], [455, 593],
    [545, 590], [564, 596], [590, 592], [605, 598], [640, 598], [655, 601], [673, 602], [684, 606], [700, 608], [780, 607], [800, 604],
    [821, 601], [850, 603], [930, 605], [950, 607], [965, 610], [1000, 608], [1030, 612], [1100, 612], [1180, 612], [1200, 608]];

function levelAt(x) {
    for (var i = 1; i < level.length; i++) {
        if (x <= level[i][0]) {
            var a = level[i - 1], b = level[i];
            return Math.round(a[1] + (b[1] - a[1]) * (x - a[0]) / (b[0] - a[0]));
        }
    }
    return level[level.length - 1][1];
}

// x, body top, body bottom, high, low, up
var special = [
    [340, 590, 594, 585, 595, 1], [461, 579, 590, 568, 591, 1], [468, 578, 583, 572, 585, 0], [474, 581, 582, 579, 585, 0],
    [481, 572, 575, 564, 579, 1], [487, 566, 578, 563, 579, 0], [493, 567, 579, 558, 581, 1], [500, 573, 577, 567, 578, 0],
    [506, 576, 578, 569, 579, 0], [513, 575, 585, 575, 585, 0], [519, 583, 586, 581, 587, 0], [525, 586, 587, 585, 590, 0],
    [532, 587, 590, 586, 591, 0], [538, 589, 591, 588, 592, 0], [545, 589, 593, 589, 593, 0], [564, 594, 598, 592, 598, 0],
    [570, 593, 594, 586, 597, 0], [596, 593, 598, 592, 598, 0], [686, 605, 611, 602, 613, 0], [801, 603, 605, 591, 606, 1],
    [821, 599, 603, 598, 604, 1], [1211, 588, 595, 588, 596, 1], [1218, 561, 562, 561, 562, 1], [1224, 527, 528, 527, 528, 1],
    [1230, 482, 499, 482, 503, 1], [1237, 424, 425, 424, 483, 1], [1249, 348, 415, 348, 416, 1], [1256, 250, 290, 250, 301, 1],
    [1268, 165, 217, 146, 253, 0]
];

for (var x = 186, i = 0; x < 1208; x += STEP, i++) {
    var near = special.some(function (s) { return Math.abs(s[0] - x) < 3.3; });
    if (near) {
        continue;
    }
    var y = levelAt(x) + (i * 7 % 3) - 1;
    candle(x, y, y + 1 + i % 2, y - (i * 5 % 3), y + 2 + i % 2, (i * 11 % 7) < 3);
}
special.forEach(function (s) { candle(s[0], s[1], s[2], s[3], s[4], s[5]); });
add("candles-layer", "rect", { class: "up", x: 1240, y: 424, width: 6, height: 1 });
add("candles-layer", "rect", { class: "up", x: 1259, y: 250, width: 6, height: 1 });

// upper limit marks
[[1257, 237], [1249, 335], [1236, 411], [1230, 469], [1224, 514], [1217, 548], [1211, 575]].forEach(function (m) {
    add("limit-layer", "text", { class: "limit", x: m[0], y: m[1] - 3 }, "상");
    add("limit-layer", "path", { class: "limit", d: "M" + (m[0] - 3) + " " + m[1] + "h6v5h3l-6 6l-6-6h3z" });
});

// price axis ticks
for (var t = 0; t < 30; t++) {
    var ty = Math.round(142 + t * 17.8) + 0.5;
    add("tick-layer", "path", { d: "M1312 " + ty + "h" + (t % 5 ? 3 : 5) });
}

// volume: x, top, up
for (var vx = 184, v = 0; vx < 1265; vx += STEP, v++) {
    add("volume-layer", "rect", { class: (v * 11 % 7) < 4 ? "up" : "dn", x: Math.round(vx), y: 724, width: 5, height: 1 });
}
[[338, 722, 1], [459, 715, 1], [465, 722, 0], [478, 717, 1], [485, 721, 0], [491, 714, 1], [497, 720, 0], [798, 720, 1],
    [1208, 722, 1], [1221, 719, 1], [1228, 720, 0], [1234, 703, 1], [1247, 708, 1], [1253, 715, 0], [1266, 688, 1]].forEach(function (b) {
    add("volume-layer", "rect", { class: b[2] ? "up" : "dn", x: b[0], y: b[1], width: 5, height: 725 - b[1] });
});

[2, 3, 4, 6, 9, 10, 13, 17, 19, 20].forEach(function (h, n) {
    add("osc-layer", "rect", { class: "osc", x: Math.round(1208 + n * STEP), y: 794 - h, width: 5, height: h });
});
```
